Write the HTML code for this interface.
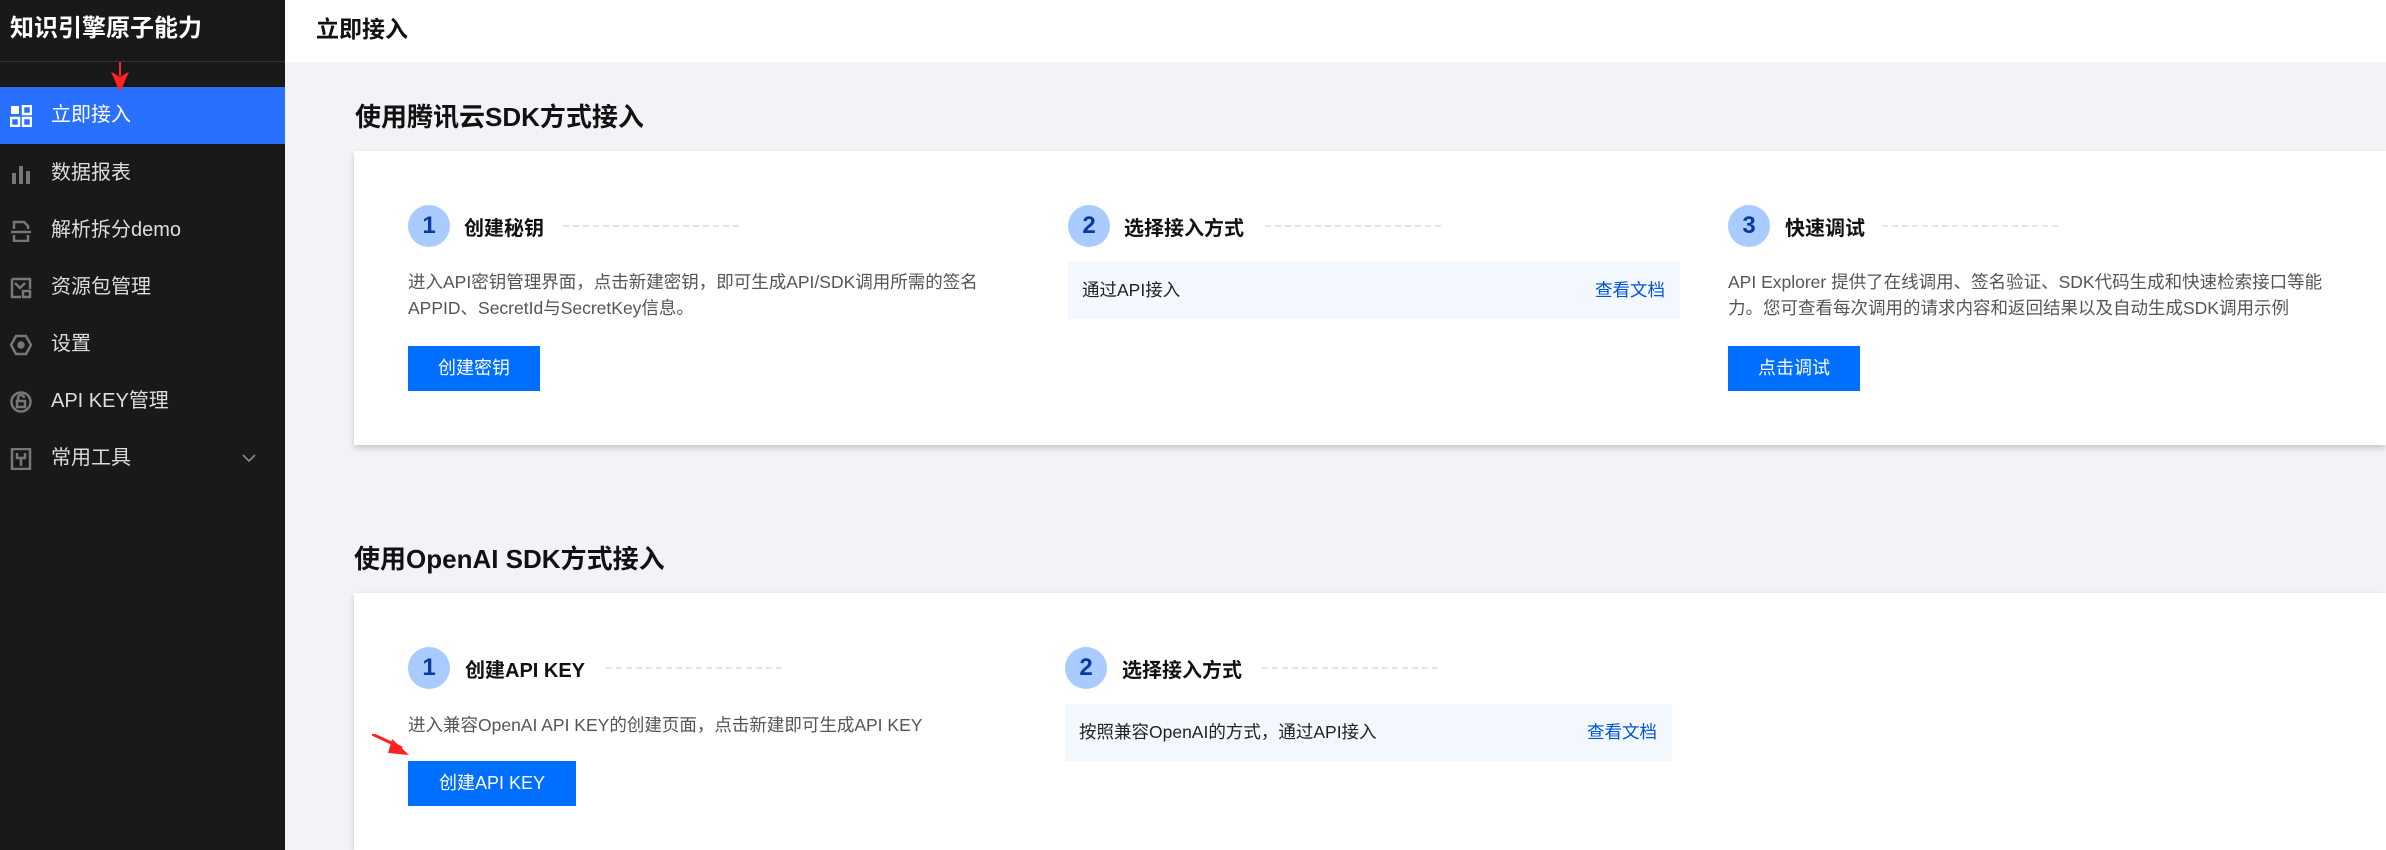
<!DOCTYPE html>
<html><head><meta charset="utf-8"><style>
*{margin:0;padding:0;box-sizing:border-box}
html{width:2386px;height:850px;overflow:hidden}
body{width:2386px;height:850px;overflow:hidden;background:#f2f3f7;font-family:"Liberation Sans","Noto Sans CJK SC",sans-serif;position:relative}
.abs{position:absolute}
#side{left:0;top:0;width:285px;height:850px;background:#191919}
.logo{left:10px;top:8px;color:#fff;font-size:24px;font-weight:bold;white-space:nowrap}
.div{left:0;top:61px;width:285px;height:1px;background:#333}
.item{left:0;width:285px;height:57px;color:#ddd;font-size:20px;line-height:57px;padding-left:51px}
.item.act{background:#2970ff;color:#fff}
.ic{position:absolute;left:10px;top:18px;width:22px;height:22px}
#hdr{left:285px;top:0;width:2101px;height:62px;background:#fff}
.pt{left:316px;top:10px;font-size:23px;font-weight:bold;color:#111}
.st{font-size:26px;font-weight:bold;color:#111;white-space:nowrap}
.card{background:#fff;box-shadow:0 3px 6px rgba(0,0,0,.18)}
.circ{width:42px;height:42px;border-radius:50%;background:#a9cbff;color:#0b3a9e;font-size:24px;font-weight:bold;text-align:center;line-height:42px}
.stt{font-size:20px;font-weight:bold;color:#111;white-space:nowrap}
.dash{height:0;border-top:2px dashed #e2e4e8}
.desc{font-size:17.5px;color:#555;line-height:26px;white-space:nowrap}
.btn{background:#006eff;color:#fff;font-size:18px;text-align:center;line-height:45px;height:45px}
.box{background:#f3f7fe;font-size:17.5px;color:#222;line-height:57px;padding-left:14px}
.lnk{position:absolute;color:#0052d9;font-size:17.5px;top:0}
</style></head><body>
<div id="side" class="abs">
<div class="abs logo">知识引擎原子能力</div>
<div class="abs div"></div>
<div class="abs item act" style="top:87px"><svg class="ic" viewBox="0 0 22 22"><rect x="1" y="1" width="8" height="8" fill="#fff"/><rect x="13" y="1" width="8" height="8" fill="none" stroke="#fff" stroke-width="2.5"/><rect x="1" y="13" width="8" height="8" fill="none" stroke="#fff" stroke-width="2.5"/><rect x="13" y="13" width="8" height="8" fill="none" stroke="#fff" stroke-width="2.5"/></svg>立即接入</div>
<div class="abs item" style="top:145px"><svg class="ic" viewBox="0 0 22 22"><rect x="2" y="10" width="4" height="11" fill="#777"/><rect x="9" y="3" width="4" height="18" fill="#777"/><rect x="16" y="8" width="4" height="13" fill="#777"/></svg>数据报表</div>
<div class="abs item" style="top:202px"><svg class="ic" viewBox="0 0 22 22" fill="none" stroke="#777" stroke-width="2.5"><path d="M4 9V2h10l4 4v3M1 12h20M4 15v6h14v-6"/></svg>解析拆分demo</div>
<div class="abs item" style="top:259px"><svg class="ic" viewBox="0 0 22 22" fill="none" stroke="#777" stroke-width="2.5"><path d="M2 2h18v10M2 2v18h9M5 6l5 5 5-5M13 14h7v6h-7z"/></svg>资源包管理</div>
<div class="abs item" style="top:316px"><svg class="ic" viewBox="0 0 22 22" fill="none" stroke="#777" stroke-width="2.5"><path d="M6 2h10l5 9-5 9H6l-5-9z"/><circle cx="11" cy="11" r="2.5" fill="#777"/></svg>设置</div>
<div class="abs item" style="top:373px"><svg class="ic" viewBox="0 0 22 22" fill="none" stroke="#777" stroke-width="2.5"><circle cx="11" cy="11" r="9.5"/><path d="M8 10V7a3 3 0 016 0M7 10h8v6H7z"/></svg>API KEY管理</div>
<div class="abs item" style="top:430px"><svg class="ic" viewBox="0 0 22 22" fill="none" stroke="#777" stroke-width="2.5"><path d="M2 1h18v20H2zM7 5v5h8V5M11 10v8"/></svg>常用工具<svg style="position:absolute;left:242px;top:24px" width="14" height="9" viewBox="0 0 14 9"><path d="M1 1l6 6 6-6" fill="none" stroke="#888" stroke-width="1.6"/></svg></div>
<svg class="abs" style="left:111px;top:62px" width="18" height="28" viewBox="0 0 18 28"><path d="M9 0L9 14M2 12L9 28L16 12L9 16Z" stroke="#f22" stroke-width="2" fill="#f22"/></svg>
</div>
<div id="hdr" class="abs"></div>
<div class="abs pt">立即接入</div>

<div class="abs st" style="left:355px;top:97px">使用腾讯云SDK方式接入</div>
<div class="abs card" style="left:354px;top:151px;width:2032px;height:294px"></div>
<div class="abs circ" style="left:408px;top:205px">1</div>
<div class="abs stt" style="left:464px;top:212px">创建秘钥</div>
<div class="abs dash" style="left:563px;top:225px;width:176px"></div>
<div class="abs desc" style="left:408px;top:269px">进入API密钥管理界面，点击新建密钥，即可生成API/SDK调用所需的签名<br>APPID、SecretId与SecretKey信息。</div>
<div class="abs btn" style="left:408px;top:346px;width:132px">创建密钥</div>

<div class="abs circ" style="left:1068px;top:205px">2</div>
<div class="abs stt" style="left:1124px;top:212px">选择接入方式</div>
<div class="abs dash" style="left:1265px;top:225px;width:176px"></div>
<div class="abs box" style="left:1068px;top:262px;width:612px;height:57px">通过API接入<span class="lnk" style="right:15px">查看文档</span></div>

<div class="abs circ" style="left:1728px;top:205px">3</div>
<div class="abs stt" style="left:1785px;top:212px">快速调试</div>
<div class="abs dash" style="left:1882px;top:225px;width:176px"></div>
<div class="abs desc" style="left:1728px;top:269px">API Explorer 提供了在线调用、签名验证、SDK代码生成和快速检索接口等能<br>力。您可查看每次调用的请求内容和返回结果以及自动生成SDK调用示例</div>
<div class="abs btn" style="left:1728px;top:346px;width:132px">点击调试</div>

<div class="abs st" style="left:354px;top:539px">使用OpenAI SDK方式接入</div>
<div class="abs card" style="left:354px;top:593px;width:2032px;height:257px"></div>
<div class="abs circ" style="left:408px;top:647px">1</div>
<div class="abs stt" style="left:465px;top:654px">创建API KEY</div>
<div class="abs dash" style="left:606px;top:667px;width:176px"></div>
<div class="abs desc" style="left:408px;top:712px">进入兼容OpenAI API KEY的创建页面，点击新建即可生成API KEY</div>
<div class="abs btn" style="left:408px;top:761px;width:168px">创建API KEY</div>
<div class="abs circ" style="left:1065px;top:647px">2</div>
<div class="abs stt" style="left:1122px;top:654px">选择接入方式</div>
<div class="abs dash" style="left:1262px;top:667px;width:176px"></div>
<div class="abs box" style="left:1065px;top:704px;width:607px;height:57px">按照兼容OpenAI的方式，通过API接入<span class="lnk" style="right:15px">查看文档</span></div>
<svg class="abs" style="left:372px;top:734px" width="38" height="24" viewBox="0 0 38 24"><path d="M0 0L30 14" stroke="#f22" stroke-width="3"/><path d="M20 5L37 21L16 19Z" fill="#f22"/></svg>
</body></html>
